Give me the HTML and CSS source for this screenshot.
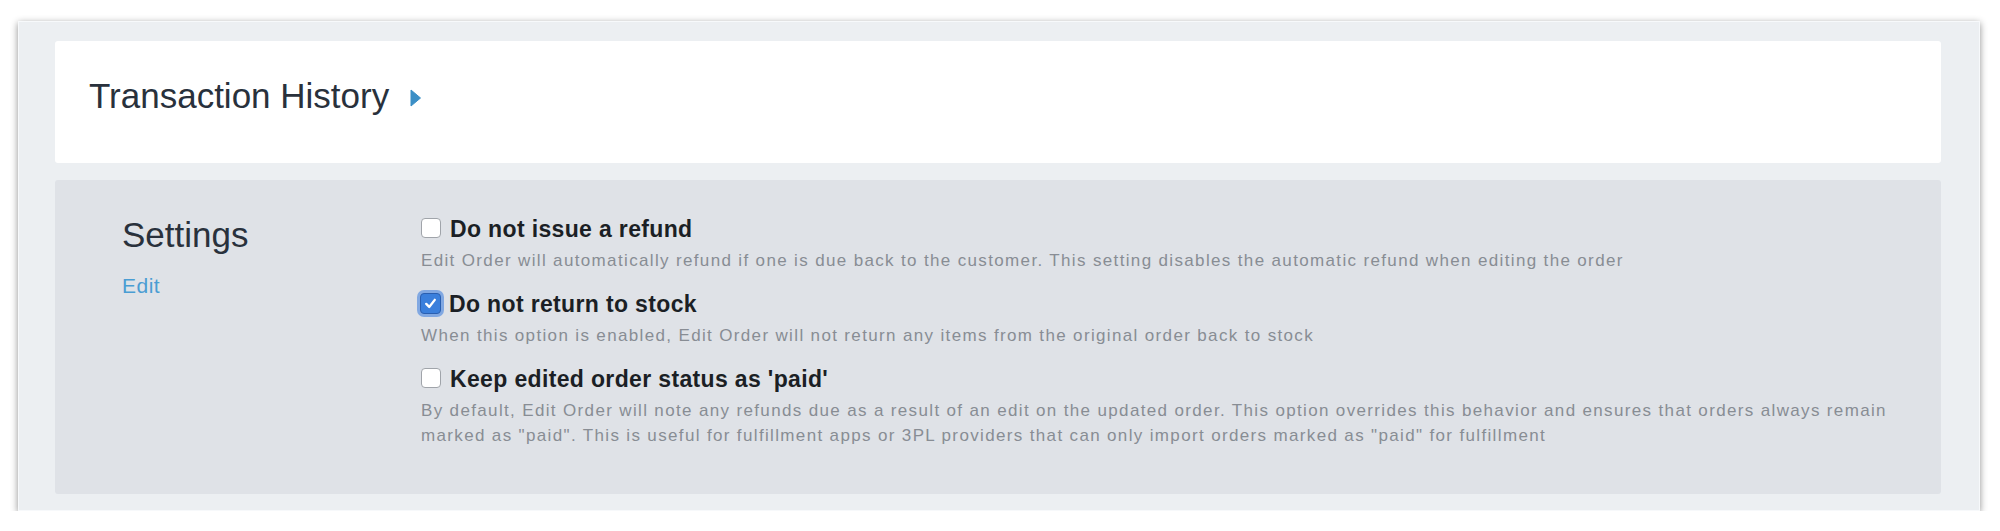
FILE: index.html
```html
<!DOCTYPE html>
<html lang="en">
<head>
<meta charset="utf-8">
<title>Edit Order Settings</title>
<link rel="stylesheet" href="styles.css">
</head>
<body>
<div class="frame">
  <section class="card history">
    <h2 class="history-title">Transaction History
      <svg class="caret" width="11" height="18" viewBox="0 0 11 18"><path d="M1 1 L10.5 9 L1 17 Z" fill="#3b8fc6" stroke="#3b8fc6" stroke-width="1" stroke-linejoin="round"/></svg>
    </h2>
  </section>
  <section class="card settings">
    <div class="settings-side">
      <h2 class="settings-title">Settings</h2>
      <a class="edit-link" href="#">Edit</a>
    </div>
    <div class="options">
      <div class="option">
        <label class="option-label"><span class="box"></span>Do not issue a refund</label>
        <p class="option-desc">Edit Order will automatically refund if one is due back to the customer. This setting disables the automatic refund when editing the order</p>
      </div>
      <div class="option">
        <label class="option-label"><span class="box checked"><svg width="15" height="15" viewBox="0 0 14 14"><path d="M3 7.4 L5.8 10.2 L11 3.6" fill="none" stroke="#fff" stroke-width="2.2" stroke-linecap="round" stroke-linejoin="round"/></svg></span>Do not return to stock</label>
        <p class="option-desc">When this option is enabled, Edit Order will not return any items from the original order back to stock</p>
      </div>
      <div class="option">
        <label class="option-label"><span class="box"></span>Keep edited order status as 'paid'</label>
        <p class="option-desc">By default, Edit Order will note any refunds due as a result of an edit on the updated order. This option overrides this behavior and ensures that orders always remain marked as "paid". This is useful for fulfillment apps or 3PL providers that can only import orders marked as "paid" for fulfillment</p>
      </div>
    </div>
  </section>
</div>
</body>
</html>
```
FILE: styles.css
```css
html, body {
  margin: 0;
  padding: 0;
  background: #ffffff;
}
body {
  font-family: "Liberation Sans", Arial, sans-serif;
}
.frame {
  margin: 21px 20px 0 18px;
  border: 1px solid #f7f9fb;
  background: #eceff2;
  padding: 19px 38px 16px 36px;
  box-shadow: 0 2px 7px rgba(0, 0, 0, 0.45);
  display: flex;
  flex-direction: column;
  gap: 17px;
}
.card {
  border-radius: 3px;
}
.history {
  background: #ffffff;
  height: 122px;
  box-sizing: border-box;
  padding: 35px 34px 0;
}
.history-title {
  margin: 0;
  font-weight: 400;
  font-size: 35px;
  line-height: 40px;
  color: #29313c;
  display: flex;
  align-items: center;
}
.caret {
  margin-left: 21px;
  margin-top: 4px;
}
.settings {
  background: #dfe2e7;
  display: grid;
  grid-template-columns: 299px 1fr;
  padding: 35px 50px 46px 67px;
}
.settings-title {
  margin: 0;
  font-weight: 400;
  font-size: 35px;
  line-height: 40px;
  color: #29313c;
}
.edit-link {
  display: block;
  margin-top: 18px;
  font-size: 21px;
  line-height: 26px;
  color: #4a9dd3;
  text-decoration: none;
  letter-spacing: 0.5px;
}
.options {
  display: flex;
  flex-direction: column;
  gap: 17px;
}
.option-label {
  display: flex;
  align-items: center;
  font-weight: 700;
  font-size: 23px;
  line-height: 28px;
  letter-spacing: 0.35px;
  color: #1b1f25;
}
.box {
  width: 20px;
  height: 20px;
  box-sizing: border-box;
  border: 1.5px solid #a0a4aa;
  border-radius: 4px;
  background: #ffffff;
  margin-right: 9px;
  margin-top: -2px;
  flex: none;
  display: flex;
  align-items: center;
  justify-content: center;
}
.box.checked {
  width: 21px;
  height: 21px;
  margin-left: -1px;
  margin-right: 8px;
  background: #3a7fdc;
  border-color: #2a5fb0;
  box-shadow: 0 0 0 3px rgba(88, 144, 224, 0.7);
}
.option-desc {
  margin: 5px 0 0;
  font-size: 17px;
  line-height: 25px;
  letter-spacing: 1.35px;
  color: #888d94;
}
```
